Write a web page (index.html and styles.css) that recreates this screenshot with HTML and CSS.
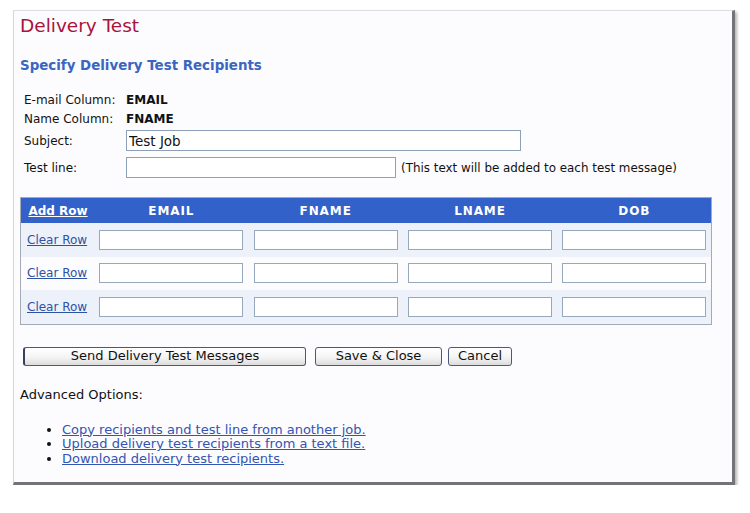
FILE: index.html
```html
<!DOCTYPE html>
<html>
<head>
<meta charset="utf-8">
<link rel="stylesheet" href="styles.css">
</head>
<body>
<div class="panel">
  <h1 class="title">Delivery Test</h1>
  <h2 class="subtitle">Specify Delivery Test Recipients</h2>

  <div class="fields">
    <div class="info-row"><span class="label">E-mail Column:</span><b>EMAIL</b></div>
    <div class="info-row"><span class="label">Name Column:</span><b>FNAME</b></div>
    <div class="field-row subject-row"><span class="label">Subject:</span><input class="text subject" type="text" value="Test Job"></div>
    <div class="field-row testline-row"><span class="label">Test line:</span><input class="text testline" type="text"><span class="hint">(This text will be added to each test message)</span></div>
  </div>

  <div class="grid">
    <div class="grid-row head">
      <a class="add-row" href="#">Add Row</a>
      <span class="col">EMAIL</span>
      <span class="col">FNAME</span>
      <span class="col">LNAME</span>
      <span class="col">DOB</span>
    </div>
    <div class="grid-row alt">
      <a class="clear" href="#">Clear Row</a>
      <input class="cell" type="text"><input class="cell" type="text"><input class="cell" type="text"><input class="cell" type="text">
    </div>
    <div class="grid-row">
      <a class="clear" href="#">Clear Row</a>
      <input class="cell" type="text"><input class="cell" type="text"><input class="cell" type="text"><input class="cell" type="text">
    </div>
    <div class="grid-row alt">
      <a class="clear" href="#">Clear Row</a>
      <input class="cell" type="text"><input class="cell" type="text"><input class="cell" type="text"><input class="cell" type="text">
    </div>
  </div>

  <div class="buttons">
    <button class="btn send">Send Delivery Test Messages</button>
    <button class="btn save">Save &amp; Close</button>
    <button class="btn cancel">Cancel</button>
  </div>

  <p class="adv">Advanced Options:</p>
  <ul class="adv-list">
    <li><a href="#">Copy recipients and test line from another job.</a></li>
    <li><a href="#">Upload delivery test recipients from a text file.</a></li>
    <li><a href="#">Download delivery test recipients.</a></li>
  </ul>
</div>
</body>
</html>
```

FILE: styles.css
```css
html, body {
  margin: 0;
  padding: 0;
  background: #ffffff;
}
body {
  font-family: "DejaVu Sans", Verdana, sans-serif;
  font-size: 12px;
  color: #111;
}
.panel {
  box-sizing: border-box;
  margin: 10px 0 0 13px;
  width: 722px;
  height: 475px;
  background: #fcfcff;
  border-top: 1px solid #dcdce4;
  border-left: 1px solid #d6d6de;
  border-right: 3px solid #747478;
  border-bottom: 3px solid #747478;
  box-shadow: 2px 2px 3px rgba(0, 0, 0, 0.3);
  padding: 5px 0 0 6px;
}
.title {
  margin: 0;
  font-size: 18.5px;
  line-height: 20px;
  font-weight: normal;
  color: #a8133c;
}
.subtitle {
  margin: 22px 0 0 0;
  font-size: 13.4px;
  line-height: 16px;
  font-weight: bold;
  color: #3a66c0;
}
.fields {
  margin: 16px 0 0 4px;
  display: flex;
  flex-direction: column;
}
.info-row {
  display: flex;
  align-items: center;
  height: 19px;
}
.label {
  width: 102px;
  flex: none;
}
.field-row {
  display: flex;
  align-items: center;
  height: 21px;
}
.subject-row { margin-top: 2px; }
.testline-row { margin-top: 6px; }
.text {
  box-sizing: border-box;
  height: 21px;
  border: 1px solid #8ea0b8;
  background: #fff;
  font-family: "DejaVu Sans", Verdana, sans-serif;
  font-size: 13.5px;
  padding: 0 2px;
  color: #111;
  margin: 0;
}
.subject { width: 395px; }
.testline { width: 270px; }
.hint {
  margin-left: 5px;
  font-size: 11.9px;
}
.grid {
  margin-top: 19px;
  width: 692px;
  box-sizing: border-box;
  border: 1px solid #a4aab6;
}
.grid-row {
  display: grid;
  grid-template-columns: 62px repeat(4, 144px);
  column-gap: 10.33px;
  padding: 0 5px 0 6px;
  align-items: center;
  height: 33.5px;
  background: #fcfcff;
}
.grid-row.alt { background: #edf1f9; }
.grid-row.head {
  height: 25px;
  background: #3161c9;
  color: #fff;
  font-weight: bold;
  font-size: 12px;
}
.col {
  text-align: center;
  letter-spacing: 0.9px;
}
.add-row {
  text-align: center;
  color: #fff;
  text-decoration: underline;
}
.clear {
  color: #2d52a6;
  font-size: 12px;
  text-decoration: underline;
}
.cell {
  box-sizing: border-box;
  width: 144px;
  height: 20px;
  margin: 0;
  border: 1px solid #98a8bc;
  background: #fff;
}
.buttons {
  margin: 22px 0 0 3px;
  display: flex;
  align-items: center;
}
.btn {
  box-sizing: border-box;
  height: 19px;
  padding: 0;
  font-family: "DejaVu Sans", Verdana, sans-serif;
  font-size: 13px;
  line-height: 16px;
  color: #111;
  border: 1px solid #4a5a72;
  border-radius: 3px;
  background: linear-gradient(#ffffff, #f4f4f4 55%, #dcdcdc);
}
.send { width: 283px; border-left: 2px solid #34425a; }
.save { width: 127px; margin-left: 9px; }
.cancel { width: 64px; margin-left: 6px; }
.adv {
  margin: 22px 0 0 0;
  font-size: 13px;
  line-height: 14px;
}
.adv-list {
  margin: 21px 0 0 0;
  padding-left: 42px;
  font-size: 13px;
  line-height: 14px;
}
.adv-list li {
  height: 14.5px;
}
.adv-list a {
  color: #3354b0;
  text-decoration: underline;
}
```
